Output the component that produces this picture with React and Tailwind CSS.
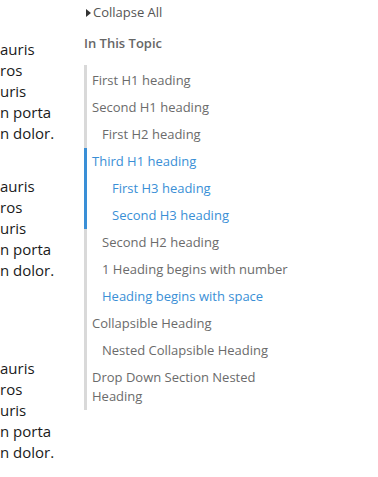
export default function App() {
  const items = [
    { t: "First H1 heading", l: 0, blue: false },
    { t: "Second H1 heading", l: 0, blue: false },
    { t: "First H2 heading", l: 1, blue: false },
    { t: "Third H1 heading", l: 0, blue: true, active: true },
    { t: "First H3 heading", l: 2, blue: true, active: true },
    { t: "Second H3 heading", l: 2, blue: true, active: true },
    { t: "Second H2 heading", l: 1, blue: false },
    { t: "1 Heading begins with number", l: 1, blue: false },
    { t: "Heading begins with space", l: 1, blue: true },
    { t: "Collapsible Heading", l: 0, blue: false },
    { t: "Nested Collapsible Heading", l: 1, blue: false },
    { t: "Drop Down Section Nested Heading", l: 0, blue: false },
  ];
  const pad = ["pl-[5px]", "pl-[15px]", "pl-[25px]"];
  return (
    <div className="w-[378px] h-[477px] bg-white flex overflow-hidden" style={{ fontFamily: '"Open Sans", "Noto Sans", sans-serif' }}>
      <div className="w-[84px] shrink-0 text-[15px] leading-[21px] text-[#1a1a1a]">
        <div className="pt-[39px]">
          <div>auris</div>
          <div>ros</div>
          <div>uris</div>
          <div>n porta</div>
          <div>n dolor.</div>
        </div>
        <div className="pt-[32px]">
          <div>auris</div>
          <div>ros</div>
          <div>uris</div>
          <div>n porta</div>
          <div>n dolor.</div>
        </div>
        <div className="pt-[77px]">
          <div>auris</div>
          <div>ros</div>
          <div>uris</div>
          <div>n porta</div>
          <div>n dolor.</div>
        </div>
      </div>
      <div className="w-[210px] shrink-0">
        <div className="flex items-center pt-[4px] h-[21px] text-[13px] text-[#555]">
          <svg width="5" height="8" viewBox="0 0 5 8" className="ml-[2px] mr-[2px]">
            <path d="M0 0 L5 4 L0 8 Z" fill="#333" />
          </svg>
          <span>Collapse All</span>
        </div>
        <div className="mt-[13px] text-[13px] font-semibold text-[#666] leading-[18px]">In This Topic</div>
        <div className="mt-[13px] w-[205px] border-l-[3px] border-[#d9d9d9] flex flex-col pt-[2px]">
          {items.map((it, i) => (
            <div
              key={i}
              className={
                (it.active ? "border-l-[3px] border-[#3a8fd6] -ml-[3px] " : "") +
                "py-[4px] text-[13px] leading-[19px] " +
                (it.blue ? "text-[#3a8fd6] " : "text-[#6b6b6b] ") +
                pad[it.l]
              }
            >
              {it.t}
            </div>
          ))}
        </div>
      </div>
    </div>
  );
}
